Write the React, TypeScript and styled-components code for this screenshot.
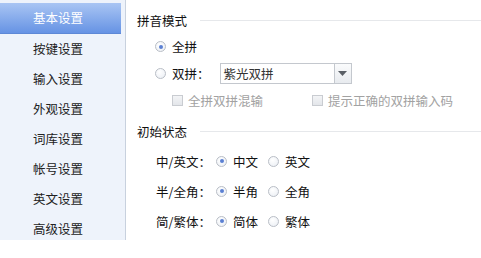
import React, { useState } from "react";
import styled, { createGlobalStyle, css } from "styled-components";

const GlobalStyle = createGlobalStyle`
  html, body {
    margin: 0;
    padding: 0;
    background: #ffffff;
  }
  body {
    font-family: "Noto Sans CJK SC", "Liberation Sans", sans-serif;
    font-size: 12.5px;
    color: #111;
  }
`;

const navItems = [
  "基本设置",
  "按键设置",
  "输入设置",
  "外观设置",
  "词库设置",
  "帐号设置",
  "英文设置",
  "高级设置",
];

const stateRows = [
  { label: "中/英文：", options: ["中文", "英文"] },
  { label: "半/全角：", options: ["半角", "全角"] },
  { label: "简/繁体：", options: ["简体", "繁体"] },
];

const Radio: React.FC<{ checked: boolean; label: string; onPick: () => void }> = ({
  checked,
  label,
  onPick,
}) => (
  <RadioLabel onClick={onPick}>
    <RadioCircle checked={checked} />
    <span>{label}</span>
  </RadioLabel>
);

const Check: React.FC<{ label: string }> = ({ label }) => (
  <CheckLabel>
    <CheckBox />
    <span>{label}</span>
  </CheckLabel>
);

const App: React.FC = () => {
  const [active, setActive] = useState(0);
  const [mode, setMode] = useState("全拼");
  const [states, setStates] = useState(["中文", "半角", "简体"]);

  return (
    <>
      <GlobalStyle />
      <Page>
        <Sidebar>
          {navItems.map((item, i) => (
            <NavItem key={item} active={i === active} onClick={() => setActive(i)}>
              {item}
            </NavItem>
          ))}
        </Sidebar>

        <Content>
          <SectionHeader>
            <span>拼音模式</span>
            <Rule />
          </SectionHeader>
          <Group>
            <Row>
              <Radio checked={mode === "全拼"} label="全拼" onPick={() => setMode("全拼")} />
            </Row>
            <Row>
              <Radio checked={mode === "双拼"} label="双拼：" onPick={() => setMode("双拼")} />
              <Select>
                <SelectText>紫光双拼</SelectText>
                <SelectButton>
                  <svg width="9" height="5" viewBox="0 0 9 5">
                    <path d="M0 0 H9 L4.5 5 Z" fill="#5a5f66" />
                  </svg>
                </SelectButton>
              </Select>
            </Row>
            <CheckRow>
              <Check label="全拼双拼混输" />
              <Check label="提示正确的双拼输入码" />
            </CheckRow>
          </Group>

          <SectionHeader second>
            <span>初始状态</span>
            <Rule />
          </SectionHeader>
          <StateGroup>
            {stateRows.map((row, r) => (
              <StateRow key={row.label}>
                <StateLabel>{row.label}</StateLabel>
                {row.options.map((opt) => (
                  <Radio
                    key={opt}
                    checked={states[r] === opt}
                    label={opt}
                    onPick={() =>
                      setStates((s) => s.map((v, k) => (k === r ? opt : v)))
                    }
                  />
                ))}
              </StateRow>
            ))}
          </StateGroup>
        </Content>
      </Page>
    </>
  );
};

const Page = styled.div`
  display: flex;
  align-items: flex-start;
  width: 481px;
  height: 258px;
  overflow: hidden;
`;

const Sidebar = styled.nav`
  display: flex;
  flex-direction: column;
  flex-shrink: 0;
  width: 126px;
  height: 240px;
  padding-top: 4px;
  box-sizing: border-box;
  background: #eef3fb;
  border-right: 1px solid #c8d1de;
`;

const NavItem = styled.div<{ active: boolean }>`
  height: 30px;
  line-height: 30px;
  padding-left: 33px;
  margin-right: 4px;
  color: #222;
  cursor: pointer;
  ${(p) =>
    p.active &&
    css`
      color: #fff;
      background: linear-gradient(#a9c5f3, #6693e4);
      border-bottom: 1px solid #5d88d6;
      margin-top: -1px;
    `}
`;

const Content = styled.div`
  flex: 1;
  min-width: 0;
  display: flex;
  flex-direction: column;
  padding: 10px 0 0 11px;
`;

const SectionHeader = styled.div<{ second?: boolean }>`
  display: flex;
  align-items: center;
  height: 20px;
  margin-top: ${(p) => (p.second ? "7px" : "0")};
  color: #111;
`;

const Rule = styled.div`
  flex: 1;
  height: 1px;
  margin-left: 13px;
  background: #e6e8eb;
`;

const Group = styled.div`
  display: flex;
  flex-direction: column;
  margin-top: 3px;
  padding-left: 18px;
`;

const Row = styled.div`
  display: flex;
  align-items: center;
  height: 27px;
  white-space: nowrap;
`;

const CheckRow = styled(Row)`
  padding-left: 17px;
`;

const RadioLabel = styled.label`
  display: flex;
  align-items: center;
  gap: 6px;
  margin-right: 10px;
  cursor: pointer;
`;

const RadioCircle = styled.span<{ checked: boolean }>`
  position: relative;
  width: 11px;
  height: 11px;
  border-radius: 50%;
  box-sizing: border-box;
  border: 1px solid #b9bec6;
  background: radial-gradient(circle at 40% 35%, #ffffff, #e9edf3);
  ${(p) =>
    p.checked &&
    css`
      &::after {
        content: "";
        position: absolute;
        left: 2.5px;
        top: 2.5px;
        width: 4px;
        height: 4px;
        border-radius: 50%;
        background: #5b80d2;
      }
    `}
`;

const Select = styled.div`
  display: flex;
  flex-shrink: 0;
  width: 132px;
  height: 21px;
  box-sizing: border-box;
  border: 1px solid #c4c8ce;
  background: #fff;
`;

const SelectText = styled.div`
  flex: 1;
  padding-left: 3px;
  line-height: 19px;
  color: #333;
`;

const SelectButton = styled.div`
  display: flex;
  align-items: center;
  justify-content: center;
  width: 16px;
  border-left: 1px solid #c4c8ce;
  background: linear-gradient(#fafbfc, #e8ebef);
`;

const CheckLabel = styled.label`
  display: flex;
  align-items: center;
  gap: 5px;
  min-width: 140px;
  flex-shrink: 0;
  white-space: nowrap;
  color: #a2a2a2;
`;

const CheckBox = styled.span`
  width: 11px;
  height: 11px;
  box-sizing: border-box;
  border: 1px solid #c9ccd1;
  background: linear-gradient(#f3f4f6, #e3e6ea);
`;

const StateGroup = styled.div`
  display: flex;
  flex-direction: column;
  margin-top: 5px;
  padding-left: 19px;
`;

const StateRow = styled.div`
  display: flex;
  align-items: center;
  height: 30px;
`;

const StateLabel = styled.span`
  width: 60px;
  color: #111;
`;

export default App;
